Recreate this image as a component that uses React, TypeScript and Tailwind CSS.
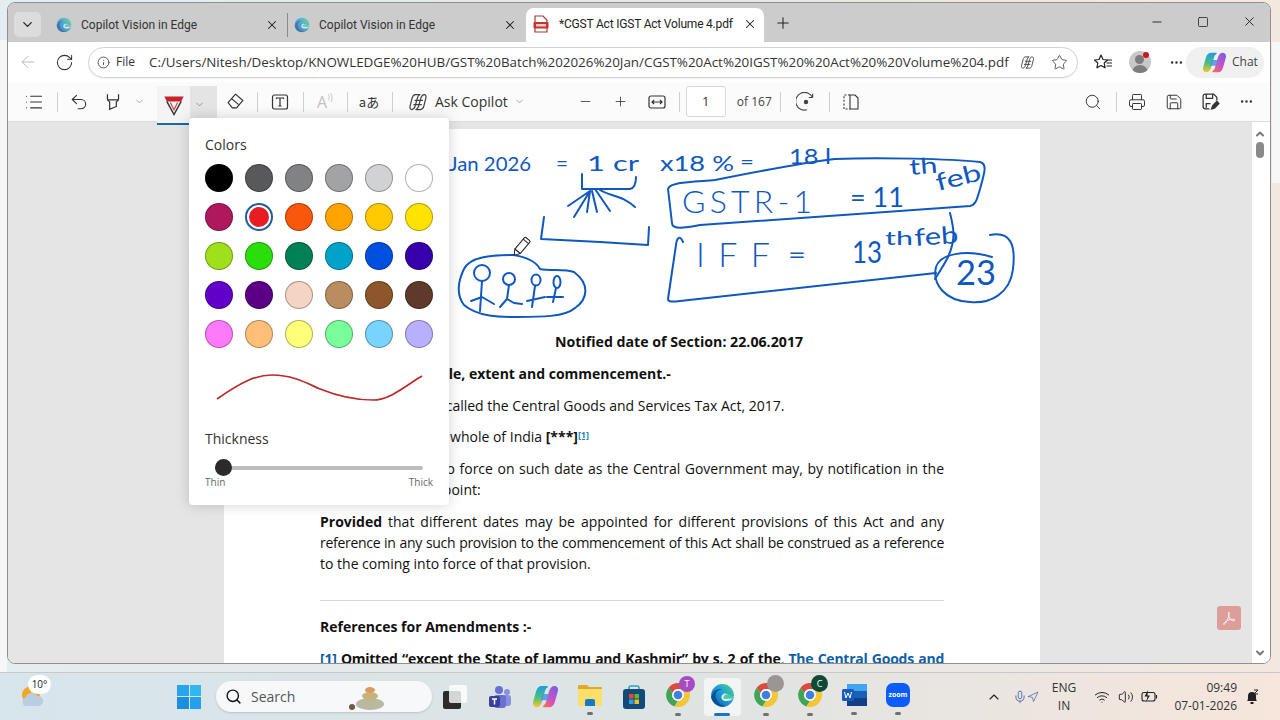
import React from "react";
import { ArrowLeft, ChevronDown, ChevronUp, Info, MoreHorizontal, Plus, RotateCw, Search, Star, X, Minus, Square, Printer, Save, List, Undo2, Wifi, Volume2, Mic, Navigation } from "lucide-react";

function EdgeIcon({ size = 16, muted = false }: { size?: number; muted?: boolean }) {
  return (
    <svg width={size} height={size} viewBox="0 0 24 24" className={muted ? "opacity-70" : ""}>
      <defs>
        <linearGradient id="edgeA" x1="0" y1="1" x2="1" y2="0">
          <stop offset="0" stopColor="#0b57a8" />
          <stop offset="0.55" stopColor="#1d9fd8" />
          <stop offset="1" stopColor="#58d67f" />
        </linearGradient>
      </defs>
      <circle cx="12" cy="12" r="11" fill="url(#edgeA)" />
      <path d="M1.5 13C3 7 8 5 12 6c-5 0-7.5 4-6.5 8 1 4 5 8 10 8-7 2-13-3-14.500-9z" fill="#0a4f9a" />
      <path d="M22.500 14.500c-2 2.500-6 3.500-9 2.500-3-1-3.500-5-.5-6.500 2.500-1 5 .5 4.500 2.500h5" fill="#eef6fb" opacity="0.95" />
      <path d="M13 14c0-2 2-3.500 4-3 2 .5 5 .5 5.500 2.500.3 1-.5 1.500-1.500 1.500h-8z" fill="#49c9a0" />
    </svg>
  );
}

function ChromeIcon({ size = 26 }: { size?: number }) {
  return (
    <svg width={size} height={size} viewBox="0 0 24 24">
      <path d="M12 1a11 11 0 0 1 9.500 5.500H12a5.500 5.500 0 0 0-5 3.200L3.200 5.500A11 11 0 0 1 12 1z" fill="#dd4b3e" />
      <path d="M3.200 5.500 7 9.700a5.500 5.500 0 0 0 5 7.800l-3.300 5A11 11 0 0 1 3.200 5.500z" fill="#3da555" />
      <path d="M21.500 6.500A11 11 0 0 1 8.700 22.500l3.300-5a5.500 5.500 0 0 0 4.700-8.300z" fill="#f4c534" />
      <circle cx="12" cy="12" r="5.300" fill="#fff" />
      <circle cx="12" cy="12" r="4" fill="#3f7fe0" />
    </svg>
  );
}

function CopilotIcon({ size = 24 }: { size?: number }) {
  return (
    <svg width={size} height={size} viewBox="0 0 24 24">
      <defs>
        <linearGradient id="copA" x1="0" y1="0" x2="0" y2="1">
          <stop offset="0" stopColor="#1f9de0" />
          <stop offset="0.55" stopColor="#49c27a" />
          <stop offset="1" stopColor="#f2c530" />
        </linearGradient>
        <linearGradient id="copB" x1="1" y1="0" x2="0" y2="1">
          <stop offset="0" stopColor="#6f5fe8" />
          <stop offset="0.55" stopColor="#d24fc0" />
          <stop offset="1" stopColor="#f6734a" />
        </linearGradient>
      </defs>
      <path d="M8.500 2.500h5.500c-1.600.6-2.600 2-3.100 3.700L8 16.500c-.7 2.700-2.300 5-4.800 5-2 0-3-2.200-2.200-5L3.800 6.800C4.700 4 6 2.500 8.500 2.500z" fill="url(#copA)" stroke="url(#copA)" strokeWidth="1.400" />
      <path d="M15.500 21.500H10c1.600-.6 2.600-2 3.100-3.700L16 7.500c.7-2.700 2.300-5 4.800-5 2 0 3 2.200 2.200 5l-2.800 9.700c-.9 2.800-2.200 4.300-4.700 4.300z" fill="url(#copB)" stroke="url(#copB)" strokeWidth="1.400" />
      <path d="M9 9.500h7.500l-1.800 6H7.300z" fill="#4f8fe8" opacity="0.85" />
    </svg>
  );
}

function CopilotOutline({ size = 20 }: { size?: number }) {
  return (
    <svg width={size} height={size} viewBox="0 0 24 24" fill="none" stroke="#444" strokeWidth="1.500" strokeLinejoin="round">
      <path d="M9 3h5.500c-1.500.5-2.500 1.800-3 3.500L8.500 17c-.7 2.500-2 4-4 4C2.800 21 2 19 2.500 17L5 7c.6-2.500 1.800-4 4-4z" />
      <path d="M15 21H9.500c1.500-.5 2.500-1.800 3-3.500L15.500 7c.7-2.500 2-4 4-4 1.700 0 2.500 2 2 4L19 17c-.6 2.500-1.800 4-4 4z" />
      <path d="M8 10h10M6.500 15h10" />
    </svg>
  );
}

function PdfFavicon() {
  return (
    <svg width="16" height="18" viewBox="0 0 16 18">
      <path d="M2 1h8l4 4v12H2z" fill="#fff" stroke="#a23a36" strokeWidth="1.200" />
      <rect x="0.500" y="7" width="15" height="6.500" rx="1" fill="#c8332d" />
      <rect x="3" y="9" width="10" height="2.500" fill="#f3c9c5" />
    </svg>
  );
}

function Sep({ className }: { className: string }) {
  return (
    <div className={`flex shrink-0 justify-center ${className}`}>
      <div className="h-[20px] w-px bg-[#cfcfcf]" />
    </div>
  );
}

function Slot({ className, children }: { className: string; children?: React.ReactNode }) {
  return <div className={`flex h-full shrink-0 items-center justify-center ${className}`}>{children}</div>;
}

function Tab({ title }: { title: string }) {
  return (
    <div className="flex h-full w-[238px] shrink-0 items-center pl-[7px]">
      <EdgeIcon muted />
      <span className="ml-[9px] w-[184px] text-[12px] text-[#333]" style={{ fontFamily: "Roboto, sans-serif" }}>{title}</span>
      <X size={14} strokeWidth={1.8} className="text-[#222]" />
    </div>
  );
}

const COLORS = [
  "#000000", "#58595b", "#808284", "#a1a3a4", "#d0d2d3", "#ffffff",
  "#b0185e", "#e81c24", "#f9570b", "#ffa400", "#ffcb00", "#ffe300",
  "#9fe01d", "#2ade0c", "#008055", "#00a2c9", "#0050e0", "#3600aa",
  "#6100c8", "#5b0086", "#f4d4c2", "#b98d60", "#8d572a", "#5f3a2a",
  "#ff79fb", "#ffbf78", "#ffff78", "#78ff9a", "#78d3ff", "#b9afff",
];

function ColorPopup() {
  return (
    <div className="absolute left-[181px] top-[115px] z-20 h-[387px] w-[260px] rounded-[4px] bg-white px-[16px] pt-[17px] shadow-[0_0_14px_rgba(0,0,0,0.18)]">
      <div className="text-[14px] leading-[20px] text-[#333]">Colors</div>
      <div className="mt-[9px] grid w-[228px] grid-cols-6 gap-x-[12px] gap-y-[11px]">
        {COLORS.map((c, i) =>
          i === 7 ? (
            <div key={c} className="flex h-[28px] w-[28px] items-center justify-center rounded-full border-[2px] border-[#1b5f9e]">
              <div className="h-[20px] w-[20px] rounded-full" style={{ backgroundColor: c }} />
            </div>
          ) : (
            <div key={c} className="h-[28px] w-[28px] rounded-full border border-black/30" style={{ backgroundColor: c }} />
          ),
        )}
      </div>
      <svg width="228" height="40" viewBox="0 0 228 40" className="mt-[21px] block">
        <path d="M12 30C35 14 50 6 67 6C90 6 105 16 115 20C135 28 150 31 168 31C185 31 200 17 217 7" fill="none" stroke="#b92a2a" strokeWidth="1.700" />
      </svg>
      <div className="mt-[20px] text-[14px] leading-[20px] text-[#333]">Thickness</div>
      <div className="relative mt-[10px] ml-[10px] h-[17px] w-[208px]">
        <div className="absolute left-0 right-0 top-[7px] h-[4px] rounded-full bg-[#bdbdbd]" />
        <div className="absolute left-0 top-0 h-[17px] w-[17px] rounded-full bg-[#2b2b2b]" />
      </div>
      <div className="flex justify-between text-[10px] leading-[12px] text-[#666]">
        <span>Thin</span>
        <span>Thick</span>
      </div>
    </div>
  );
}

const INK = "#0f58c0";

function Ink() {
  const txt = { fill: INK, fontFamily: "Lato, sans-serif", fontWeight: 400 } as const;
  return (
    <svg width="816" height="200" viewBox="224 130 816 200" className="block">
      <g fill="none" stroke={INK} strokeWidth="2" strokeLinecap="round" strokeLinejoin="round">
        <path d="M668 190C670 183 690 183 715 181 760 172 800 164 835 160 880 158 950 160 980 163 988 165 984 175 980 190 977 200 976 206 970 207L700 226C685 229 672 231 672 224z" />
        <path d="M683 243C680 236 677 238 676 246L668 300C668 303 672 303 680 302L936 274" />
        <path d="M950 214C954 230 956 240 948 258 944 266 940 272 935 280" />
        <path d="M990 236C1010 232 1016 245 1013 270 1010 295 990 305 970 303 945 302 932 285 936 268 940 255 965 250 992 258" />
        <path d="M544 218 541 240 600 243 648 246 649 228" />
        <path d="M582 175V190L630 190C635 189 636 184 636 178" />
        <path d="M590 192 568 207M590 192 574 218M590 192 587 213M592 192 597 213M595 190 610 212M600 191C612 198 622 196 635 208" />
        <path d="M513 256C490 256 470 258 464 270 458 282 456 296 464 306 478 318 500 318 517 318 540 318 565 318 575 309 588 300 590 285 574 273 565 270 550 272 540 270 537 264 528 258 513 256z" />
        <circle cx="482" cy="274" r="8" />
        <path d="M482 282 480 312M471 302 482 298 494 305" />
        <circle cx="509" cy="280" r="6" />
        <path d="M509 286 507 300 500 308M507 300 514 304 522 305" />
        <ellipse cx="536" cy="281" rx="4.500" ry="5.500" />
        <path d="M535 287 532 308M527 302 545 298" />
        <ellipse cx="557" cy="283" rx="3.500" ry="6" />
        <path d="M556 289 553 303M547 298 563 298" />
      </g>
      <g style={txt}>
        <text x="449" y="172" fontSize="20" textLength="82" lengthAdjust="spacingAndGlyphs">Jan 2026</text>
        <text x="556" y="172" fontSize="22" textLength="12" lengthAdjust="spacingAndGlyphs">=</text>
        <text x="587" y="172" fontSize="21" textLength="52" lengthAdjust="spacingAndGlyphs">1 cr</text>
        <text x="660" y="172" fontSize="21" textLength="74" lengthAdjust="spacingAndGlyphs">x18 %</text>
        <text x="740" y="170" fontSize="20" textLength="14" lengthAdjust="spacingAndGlyphs">=</text>
        <text x="789" y="165" fontSize="22" textLength="42" lengthAdjust="spacingAndGlyphs">18 l</text>
        <text x="682" y="214" fontSize="32" fontWeight="300" textLength="130" lengthAdjust="spacing">GSTR-1</text>
        <text x="850" y="208" fontSize="26" textLength="54" lengthAdjust="spacingAndGlyphs">= 11</text>
        <text x="910" y="176" fontSize="22" textLength="28" lengthAdjust="spacingAndGlyphs" transform="rotate(-5 910 176)">th</text>
        <text x="938" y="192" fontSize="24" textLength="46" lengthAdjust="spacingAndGlyphs" transform="rotate(-14 938 192)">feb</text>
        <text x="696" y="268" fontSize="34" fontWeight="300" textLength="74" lengthAdjust="spacing">IFF</text>
        <text x="788" y="264" fontSize="24" textLength="18" lengthAdjust="spacingAndGlyphs">=</text>
        <text x="852" y="264" fontSize="30" textLength="30" lengthAdjust="spacingAndGlyphs">13</text>
        <text x="885" y="246" fontSize="20" textLength="28" lengthAdjust="spacingAndGlyphs">th</text>
        <text x="915" y="247" fontSize="24" textLength="44" lengthAdjust="spacingAndGlyphs" transform="rotate(-4 915 247)">feb</text>
        <text x="956" y="286" fontSize="34" textLength="40" lengthAdjust="spacingAndGlyphs">23</text>
      </g>
      <g transform="translate(522 247) rotate(40)">
        <rect x="-3.500" y="-9" width="7" height="16" rx="1" fill="#fff" stroke="#222" strokeWidth="1" />
        <path d="M-3.500 7 0 12 3.500 7z" fill="#fff" stroke="#222" strokeWidth="1" />
        <path d="M-3.500-6h7" stroke="#222" strokeWidth="1" />
      </g>
    </svg>
  );
}

function Page() {
  return (
    <div className="relative h-[700px] w-[816px] shrink-0 bg-white" style={{ fontFamily: '"Open Sans", sans-serif' }}>
      <Ink />
      <div className="pl-[96px] pr-[96px] text-[14px] leading-[21px] text-[#111]">
        <p className="mt-[2px] pl-[94px] text-center text-[14.200px] font-bold">Notified date of Section: 22.06.2017</p>
        <p className="mt-[11px] font-bold">Section 1. Short title, extent and commencement.-</p>
        <p className="mt-[11px]">(1) This Act may be called the Central Goods and Services Tax Act, 2017.</p>
        <p className="mt-[10px]">
          (2) It extends to the whole of India <b>[***]</b>
          <sup className="text-[9px] font-bold text-[#1a8bb8] underline">[1]</sup>
        </p>
        <p className="mt-[11px] text-justify">(3) It shall come into force on such date as the Central Government may, by notification in the Official Gazette, appoint:</p>
        <div className="mt-[11px]">
          <p className="text-justify [text-align-last:justify]">
            <b>Provided</b> that different dates may be appointed for different provisions of this Act and any
          </p>
          <p className="text-justify tracking-[-0.3px] [text-align-last:justify]">reference in any such provision to the commencement of this Act shall be construed as a reference</p>
          <p>to the coming into force of that provision.</p>
        </div>
        <div className="mt-[26px] h-[1px] bg-[#d8d8d8]" />
        <p className="mt-[15px] font-bold">References for Amendments :-</p>
        <p className="mt-[11px] text-justify font-bold tracking-[-0.25px] [text-align-last:justify]">
          <span className="text-[#0f5fa8]">[1]</span> Omitted “except the State of Jammu and Kashmir” by s. 2 of the, <span className="text-[#0f5fa8]">The Central Goods and</span>
        </p>
      </div>
    </div>
  );
}

function Dot() {
  return <div className="mt-[5px] h-[3px] w-[6px] rounded-full bg-[#707070]" />;
}

function App() {
  return (
    <div className="relative flex h-[720px] w-[1280px] flex-col overflow-hidden bg-gradient-to-r from-[#e4edf1] via-[#e6e8e6] to-[#f3e8df]" style={{ fontFamily: '"Open Sans", sans-serif' }}>
      <div className="absolute left-0 top-[40px] h-[632px] w-[7px] bg-[#f4f6f7]" />
      <div className="absolute right-0 top-[42px] h-[141px] w-[8px] bg-[#f7f7f7]" />
      <div className="relative h-[672px] shrink-0 pt-[2px] pl-[7px] pr-[9px]">
        <div className="relative flex h-[662px] flex-col overflow-hidden rounded-[8px] border border-[#8f8f8f] bg-white">
          {/* Tab strip */}
          <div className="flex h-[39px] shrink-0 items-end bg-[#cccccc]">
            <div className="flex h-full w-[518px] shrink-0 items-center pt-[4px]">
              <div className="ml-[6px] flex h-[25px] w-[27px] shrink-0 items-center justify-center rounded-[5px] bg-[#dcdcdc]">
                <ChevronDown size={15} className="text-[#222]" />
              </div>
              <div className="ml-[8px] flex items-center">
                <Tab title="Copilot Vision in Edge" />
                <div className="h-[24px] w-px shrink-0 bg-[#8a8a8a]" />
                <div className="-ml-[1px]">
                  <Tab title="Copilot Vision in Edge" />
                </div>
              </div>
            </div>
            <div className="flex h-[34px] w-[238px] shrink-0 items-center rounded-t-[8px] bg-white pb-[2px] pl-[7px]">
              <PdfFavicon />
              <span className="ml-[10px] w-[184px] whitespace-nowrap text-[12px] tracking-[-0.2px] text-[#222]" style={{ fontFamily: "Roboto, sans-serif" }}>*CGST Act IGST Act Volume 4.pdf</span>
              <X size={14} strokeWidth={1.8} className="text-[#222]" />
            </div>
            <Slot className="w-[38px]">
              <Plus size={18} strokeWidth={1.4} className="text-[#222]" />
            </Slot>
            <div className="flex-1" />
            <Slot className="w-[46px] pb-[2px]">
              <Minus size={14} strokeWidth={1.6} className="text-[#222]" />
            </Slot>
            <Slot className="w-[46px] pb-[2px]">
              <Square size={12} strokeWidth={1.6} className="text-[#222]" />
            </Slot>
            <Slot className="mr-[-2px] w-[46px] pb-[2px]">
              <X size={15} strokeWidth={1.5} className="text-[#222]" />
            </Slot>
          </div>
          {/* Address row */}
          <div className="flex h-[40px] shrink-0 items-center bg-white">
            <Slot className="w-[40px]">
              <ArrowLeft size={20} strokeWidth={1.1} className="text-[#b5b5b5]" />
            </Slot>
            <Slot className="w-[32px]">
              <RotateCw size={19} strokeWidth={1.3} className="text-[#333]" />
            </Slot>
            <div className="ml-[8px] flex h-[31px] w-[990px] shrink-0 items-center rounded-full border border-[#d2d2d2] bg-white pl-[8px] shadow-[0_1px_2px_rgba(0,0,0,0.06)]">
              <Info size={13} strokeWidth={1.5} className="text-[#333]" />
              <span className="ml-[6px] text-[12px] text-[#333]">File</span>
              <span className="ml-[14px] w-[861px] whitespace-nowrap text-[13.400px] text-[#333]">C:/Users/Nitesh/Desktop/KNOWLEDGE%20HUB/GST%20Batch%202026%20Jan/CGST%20Act%20IGST%20%20Act%20%20Volume%204.pdf</span>
              <span className="ml-[10px]"><CopilotOutline size={15} /></span>
              <Star size={17} strokeWidth={1.2} className="ml-[16px] text-[#444]" />
            </div>
            <Slot className="ml-[7px] w-[36px]">
              <svg width="20" height="18" viewBox="0 0 20 18" fill="none" stroke="#222" strokeWidth="1.200" strokeLinejoin="round">
                <path d="M8 2l2 4.500 4.500.5-3.300 3 .9 4.800L8 12.500 3.900 14.800l.9-4.800L1.500 7 6 6.500z" />
                <path d="M14 7h5M13.500 10h5.500M13.500 13h5.500" />
              </svg>
            </Slot>
            <Slot className="relative w-[37px]">
              <div className="relative flex h-[22px] w-[22px] flex-col items-center justify-end overflow-hidden rounded-full bg-[#c8c8c8]">
                <div className="h-[9px] w-[9px] rounded-full bg-[#7d7d7d]" />
                <div className="mt-[1px] h-[8px] w-[16px] rounded-t-full bg-[#7d7d7d]" />
              </div>
              <div className="absolute left-[22px] top-[10px] h-[6px] w-[6px] rounded-full bg-[#d0141c]" />
            </Slot>
            <Slot className="w-[36px]">
              <MoreHorizontal size={15} className="text-[#333]" />
            </Slot>
            <div className="ml-[-8px] flex h-[31px] w-[78px] shrink-0 items-center rounded-full bg-[#f0f0f0] pl-[17px]">
              <CopilotIcon size={23} />
              <span className="ml-[6px] text-[12px] text-[#444]">Chat</span>
            </div>
          </div>
          {/* PDF toolbar */}
          <div className="z-10 flex h-[40px] shrink-0 items-center border-b border-[#dcdcdc] bg-[#fbfbfb] pl-[6px]">
            <Slot className="w-[40px]">
              <List size={20} strokeWidth={1.3} className="text-[#333]" />
            </Slot>
            <Sep className="w-[6px]" />
            <Slot className="w-[38px]">
              <Undo2 size={20} strokeWidth={1.3} className="text-[#333]" />
            </Slot>
            <Slot className="w-[30px]">
              <svg width="20" height="20" viewBox="0 0 18 18" fill="none" stroke="#333" strokeWidth="1.100">
                <path d="M3 2v4c0 1.500 1 2 2 3v6.500l6-2.500V9c1-1 2-1.500 2-3V2" transform="translate(1 0)" />
                <path d="M4 7h10" />
              </svg>
            </Slot>
            <Slot className="w-[22px]">
              <ChevronDown size={11} strokeWidth={1.3} className="text-[#777]" />
            </Slot>
            <div className="w-[7px] shrink-0" />
            <Slot className="mt-[4px] h-[30px] w-[33px] self-start border-b-[2px] border-[#1769aa] bg-[#f4f4f4]">
              <svg width="24" height="24" viewBox="0 0 20 20">
                <path d="M2 3h16l-2 4H4z" fill="#c8232b" />
                <path d="M4 7l6 11 6-11" fill="none" stroke="#333" strokeWidth="1.200" />
                <path d="M7 8l3 6 3-6" fill="none" stroke="#d3434a" strokeWidth="1" />
              </svg>
            </Slot>
            <Slot className="mt-[4px] h-[30px] w-[27px] self-start border-b-[2px] border-[#1769aa] bg-[#e4e4e4] pr-[9px]">
              <ChevronDown size={11} strokeWidth={1.3} className="text-[#666]" />
            </Slot>
            <Slot className="w-[36px]">
              <svg width="19" height="19" viewBox="0 0 18 18" fill="none" stroke="#333" strokeWidth="1.100" strokeLinejoin="round">
                <path d="M2 10l7-8 7 6-6 7H6z" />
                <path d="M5.500 6.500l6.500 5.500" />
              </svg>
            </Slot>
            <Sep className="w-[8px]" />
            <Slot className="w-[38px]">
              <svg width="18" height="18" viewBox="0 0 18 18" fill="none" stroke="#333" strokeWidth="1.200">
                <rect x="1.500" y="2" width="15" height="14" rx="2" />
                <path d="M5.500 6V5h7v1M9 5v8M7.500 13h3" />
              </svg>
            </Slot>
            <Sep className="w-[8px]" />
            <Slot className="w-[36px]">
              <span className="text-[16px] text-[#c2c2c2]">A</span>
              <svg width="6" height="10" viewBox="0 0 6 10" fill="none" stroke="#c2c2c2" strokeWidth="0.900" className="mb-[8px]">
                <path d="M1 1c1.500 2 1.500 4 .5 6M3.500 0c2 3 2 6 .5 9" />
              </svg>
            </Slot>
            <Sep className="w-[8px]" />
            <Slot className="w-[36px]">
              <span className="text-[13px] text-[#333]" style={{ fontFamily: '"Noto Sans CJK JP", "Open Sans", sans-serif' }}>aあ</span>
            </Slot>
            <Sep className="w-[10px]" />
            <div className="ml-[11px] flex h-full shrink-0 items-center">
              <CopilotOutline size={20} />
              <span className="ml-[7px] text-[14px] text-[#333]">Ask Copilot</span>
              <ChevronDown size={11} strokeWidth={1.3} className="ml-[6px] text-[#777]" />
            </div>
            <Slot className="ml-[44px] w-[34px]">
              <Minus size={15} strokeWidth={1.3} className="text-[#333]" />
            </Slot>
            <Slot className="w-[35px]">
              <Plus size={15} strokeWidth={1.3} className="text-[#333]" />
            </Slot>
            <Slot className="w-[38px]">
              <svg width="18" height="14" viewBox="0 0 18 14" fill="none" stroke="#333" strokeWidth="1.200">
                <rect x="1" y="1" width="16" height="12" rx="2" />
                <path d="M4 7h10M6 5 4 7l2 2M12 5l2 2-2 2" />
              </svg>
            </Slot>
            <Sep className="w-[8px]" />
            <div className="ml-[2px] flex h-[31px] w-[40px] shrink-0 items-center justify-center rounded-[3px] border border-[#d8d8d8] bg-white text-[13px] text-[#333]">1</div>
            <span className="ml-[11px] w-[34px] shrink-0 whitespace-nowrap text-[12px] text-[#444]">of 167</span>
            <Sep className="ml-[6px] w-[8px]" />
            <Slot className="w-[42px]">
              <svg width="20" height="20" viewBox="0 0 18 18" fill="none" stroke="#444" strokeWidth="1">
                <path d="M3 5a8 8 0 1 1 5 11M3 5V1.500M3 5h3.500" transform="matrix(-1 0 0 1 18 0)" />
                <circle cx="9" cy="9" r="1.500" fill="#444" />
              </svg>
            </Slot>
            <Sep className="w-[6px]" />
            <Slot className="w-[34px]">
              <svg width="18" height="16" viewBox="0 0 18 16" fill="none" stroke="#333" strokeWidth="1.100">
                <path d="M9 1H3v14h6" strokeDasharray="2 1.600" />
                <path d="M9 1h5l3 3v11H9z" />
              </svg>
            </Slot>
            <div className="flex-1" />
            <Slot className="mr-[1px] w-[38px]">
              <Search size={18} strokeWidth={1.3} className="text-[#333]" />
            </Slot>
            <Sep className="w-[6px]" />
            <Slot className="w-[36px]">
              <Printer size={18} strokeWidth={1.3} className="text-[#333]" />
            </Slot>
            <Slot className="w-[37px]">
              <Save size={18} strokeWidth={1.3} className="text-[#333]" />
            </Slot>
            <Slot className="w-[36px]">
              <svg width="19" height="19" viewBox="0 0 18 18" fill="none" stroke="#333" strokeWidth="1.200">
                <path d="M8 16H4a2 2 0 0 1-2-2V4a2 2 0 0 1 2-2h8l3 3v3M5 2v4h6V2M5 15v-4h4" />
                <path d="M10 16l1-3 4-4 2 2-4 4z" fill="#333" />
              </svg>
            </Slot>
            <Slot className="w-[36px]">
              <MoreHorizontal size={15} className="text-[#333]" />
            </Slot>
            <div className="w-[6px] shrink-0" />
          </div>
          {/* Viewer */}
          <div className="flex min-h-0 flex-1 overflow-hidden bg-[#e5e5e5]">
            <div className="flex min-w-0 flex-1 justify-start overflow-hidden pl-[216px] pt-[7px]">
              <Page />
            </div>
            <div className="flex w-[18px] shrink-0 flex-col items-center bg-white pr-[2px] pt-[6px]">
              <ChevronUp size={12} strokeWidth={4} className="text-[#777]" />
              <div className="mt-[2px] h-[16px] w-[8px] rounded-full bg-[#8a8a8a]" />
              <div className="flex-1" />
              <ChevronDown size={12} strokeWidth={4} className="mb-[4px] text-[#777]" />
            </div>
          </div>
          <ColorPopup />
          <div className="absolute left-[1209px] top-[603px] flex h-[24px] w-[24px] items-center justify-center rounded-[3px] bg-[#dc9d9b]">
            <svg width="16" height="16" viewBox="0 0 16 16" fill="none" stroke="#fbeeee" strokeWidth="1">
              <path d="M8 2c-1 3 .5 6 2 8 1.500 1 4 1 4 0s-3-1-5-.5S3 12 2.500 14c0 1 1.500 0 2.500-1.500C7 10 8.500 4 8 2z" />
            </svg>
          </div>
        </div>
      </div>
      {/* Taskbar */}
      <div className="relative flex h-[48px] flex-1 items-center border-t border-[#c9c9c9] bg-gradient-to-r from-[#d7e5ec] via-[#dde4e4] to-[#f6e6dc] text-[#222]">
        <Slot className="relative w-[66px]">
          <svg width="26" height="30" viewBox="0 0 26 30">
            <circle cx="11" cy="13" r="9" fill="#f5a623" />
            <path d="M5 24a5 5 0 0 1 1-9 6 6 0 0 1 11-1 5 5 0 0 1 2 10z" fill="#b9cde0" />
          </svg>
          <div className="absolute left-[28px] top-[2px] flex h-[19px] w-[23px] items-center justify-center rounded-full bg-white text-[10px] text-[#222]">10°</div>
        </Slot>
        <div className="ml-[111px] grid h-[24px] w-[24px] shrink-0 grid-cols-2 gap-[1px]">
          <div className="bg-[#27a5ea]" />
          <div className="bg-[#33b5f0]" />
          <div className="bg-[#1b8fe0]" />
          <div className="bg-[#25a0ea]" />
        </div>
        <div className="ml-[15px] flex h-[31px] w-[216px] shrink-0 items-center rounded-full bg-[#f6f8f9] pl-[9px] shadow-[0_1px_2px_rgba(0,0,0,0.15)]">
          <Search size={17} strokeWidth={2} className="text-[#111]" />
          <span className="ml-[9px] text-[14px] text-[#555]">Search</span>
          <svg width="40" height="28" viewBox="0 0 40 28" className="ml-[51px]">
            <ellipse cx="24" cy="21" rx="14" ry="6" fill="#b9b8a0" />
            <ellipse cx="24" cy="13" rx="8" ry="4" fill="#c9b27a" />
            <ellipse cx="24" cy="7" rx="5" ry="3" fill="#d99a5a" />
            <circle cx="6" cy="24" r="3" fill="#6e5a4a" />
          </svg>
        </div>
        <Slot className="ml-[1px] w-[44px]">
          <div className="relative h-[24px] w-[24px]">
            <div className="absolute bottom-0 left-0 h-[18px] w-[18px] rounded-[2px] bg-[#2b2b2b]" />
            <div className="absolute right-0 top-0 h-[18px] w-[18px] rounded-[2px] bg-white/80" />
          </div>
        </Slot>
        <Slot className="w-[46px]">
          <svg width="24" height="24" viewBox="0 0 24 24">
            <circle cx="11" cy="5" r="4" fill="#6a6fd0" />
            <circle cx="19" cy="7" r="3" fill="#8b8fe0" />
            <rect x="14" y="10" width="9" height="11" rx="3" fill="#8b8fe0" />
            <rect x="6" y="10" width="12" height="13" rx="3" fill="#6a6fd0" />
            <rect x="1" y="11" width="11" height="11" rx="2" fill="#3b3f9e" />
            <path d="M4 14h5M6.500 14v5.500" stroke="#fff" strokeWidth="1.500" />
          </svg>
        </Slot>
        <Slot className="w-[44px]">
          <CopilotIcon size={25} />
        </Slot>
        <Slot className="w-[45px] flex-col pt-[5px]">
          <svg width="26" height="24" viewBox="0 0 26 24">
            <path d="M1 3a1 1 0 0 1 1-1h8l2 2h12a1 1 0 0 1 1 1v4H1z" fill="#e0a92a" />
            <path d="M1 6h24v16a1 1 0 0 1-1 1H2a1 1 0 0 1-1-1z" fill="#fadf6a" />
            <path d="M8 23v-5a2 2 0 0 1 2-2h6a2 2 0 0 1 2 2v5z" fill="#1a78c8" />
          </svg>
          <Dot />
        </Slot>
        <Slot className="w-[44px]">
          <svg width="24" height="26" viewBox="0 0 24 26">
            <path d="M7 6V4a2 2 0 0 1 2-2h6a2 2 0 0 1 2 2v2" fill="none" stroke="#2a9fc8" strokeWidth="1.500" />
            <rect x="1" y="5" width="22" height="20" rx="3" fill="#124a78" />
            <rect x="7" y="10" width="4.500" height="4.500" fill="#e8492f" />
            <rect x="12.500" y="10" width="4.500" height="4.500" fill="#5cb838" />
            <rect x="7" y="15.500" width="4.500" height="4.500" fill="#2aa0e8" />
            <rect x="12.500" y="15.500" width="4.500" height="4.500" fill="#f4bc20" />
          </svg>
        </Slot>
        <Slot className="relative w-[44px] flex-col pt-[5px]">
          <ChromeIcon />
          <div className="absolute left-[23px] top-[3px] flex h-[16px] w-[16px] items-center justify-center rounded-full bg-[#a64bc2] text-[9px] text-white">T</div>
          <Dot />
        </Slot>
        <div className="mx-[3.500px] flex h-[38px] w-[37px] shrink-0 flex-col items-center justify-end rounded-[4px] bg-white/60">
          <EdgeIcon size={25} />
          <div className="mt-[5px] h-[3px] w-[16px] rounded-full bg-[#1b72c0]" />
        </div>
        <Slot className="relative w-[44px] flex-col pt-[5px]">
          <ChromeIcon />
          <div className="absolute left-[23px] top-[2px] h-[17px] w-[17px] rounded-full bg-[#9b9693]" />
          <Dot />
        </Slot>
        <Slot className="relative w-[44px] flex-col pt-[5px]">
          <ChromeIcon />
          <div className="absolute left-[23px] top-[2px] flex h-[17px] w-[17px] items-center justify-center rounded-full bg-[#0e4a36] text-[9px] text-white">C</div>
          <Dot />
        </Slot>
        <Slot className="w-[44px] flex-col pt-[5px]">
          <svg width="25" height="24" viewBox="0 0 25 24">
            <rect x="5" y="1" width="20" height="22" rx="2" fill="#1a5fb8" />
            <rect x="5" y="1" width="20" height="7" fill="#41a5ee" />
            <rect x="5" y="15" width="20" height="8" fill="#123f8a" />
            <rect x="0" y="6" width="12" height="12" rx="1.500" fill="#185abd" />
            <path d="M2.500 9l1.500 6 2-5 2 5 1.500-6" fill="none" stroke="#fff" strokeWidth="1" />
          </svg>
          <Dot />
        </Slot>
        <Slot className="w-[44px] flex-col pt-[5px]">
          <div className="flex h-[24px] w-[24px] items-center justify-center rounded-[7px] bg-[#0b5cff] text-[7px] font-bold text-white">zoom</div>
          <Dot />
        </Slot>
        <Slot className="ml-[62px] w-[24px]">
          <ChevronUp size={16} strokeWidth={1.7} className="text-[#222]" />
        </Slot>
        <Slot className="ml-[5px] w-[30px]">
          <Mic size={14} strokeWidth={1.4} className="text-[#3a62a8]" />
          <Navigation size={12} strokeWidth={1.4} className="text-[#3a62a8]" />
        </Slot>
        <div className="ml-[3px] flex w-[40px] shrink-0 flex-col items-center text-[12px] leading-[18px] text-[#333]">
          <span>ENG</span>
          <span>IN</span>
        </div>
        <Slot className="ml-[6px] w-[24px]">
          <Wifi size={16} strokeWidth={1.5} className="text-[#222]" />
        </Slot>
        <Slot className="w-[24px]">
          <Volume2 size={16} strokeWidth={1.4} className="text-[#222]" />
        </Slot>
        <Slot className="w-[22px]">
          <svg width="17" height="13" viewBox="0 0 17 13" fill="none" stroke="#222" strokeWidth="1.100">
            <rect x="1" y="2.500" width="13" height="8.500" rx="2" />
            <path d="M15.500 5v3.500" />
            <path d="M7 0 3.500 6.500h3L5 12l4-6.500H6.500z" fill="#222" stroke="none" />
          </svg>
        </Slot>
        <div className="ml-[13px] flex w-[64px] shrink-0 flex-col items-end whitespace-nowrap text-[12px] leading-[18px] text-[#333]">
          <span>09:49</span>
          <span>07-01-2026</span>
        </div>
        <Slot className="ml-[5px] w-[20px]">
          <svg width="14" height="16" viewBox="0 0 14 16">
            <path d="M2 12c1-1 1-2 1-5a4 4 0 0 1 8 0c0 3 0 4 1 5z" fill="#222" />
            <rect x="5.500" y="13" width="3" height="2" fill="#222" />
            <path d="M9 1h4l-4 4h4" fill="none" stroke="#222" strokeWidth="1" />
          </svg>
        </Slot>
      </div>
    </div>
  );
}

export default App;
